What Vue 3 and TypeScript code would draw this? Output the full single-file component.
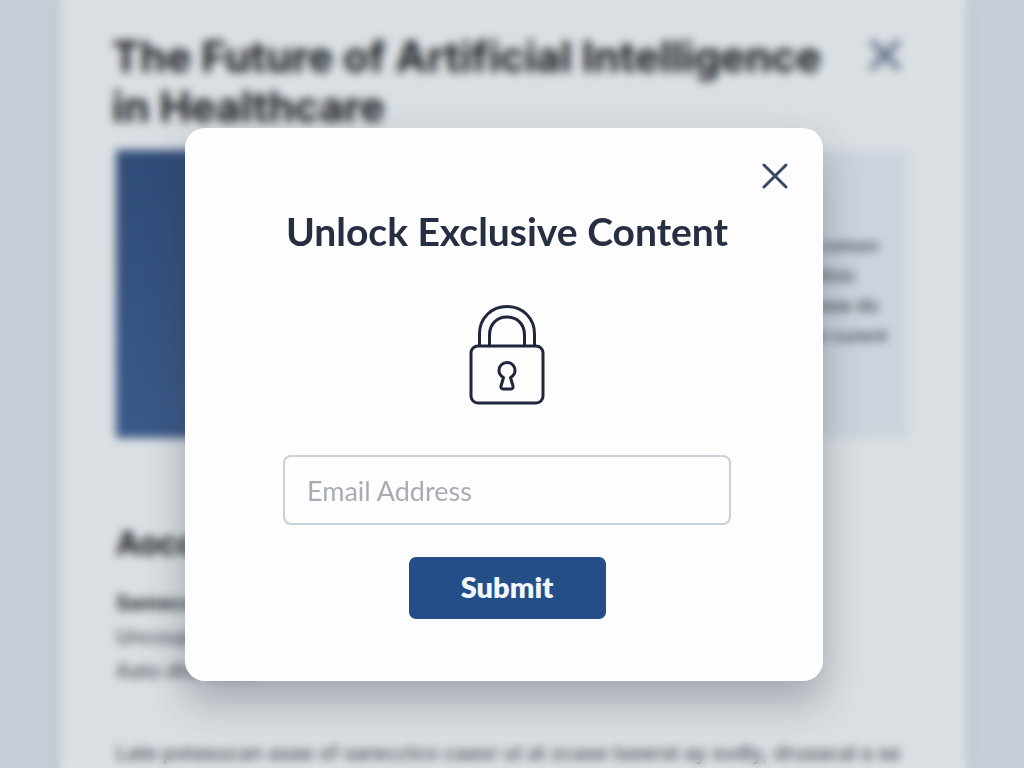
<script setup lang="ts">
import { ref } from 'vue'

const email = ref('')
const open = ref(true)

const asideLines: string[] = [
  'Models in comon',
  'care and clinic',
  'Patients anew do',
  'Results are curent',
]
</script>

<template>
  <div class="page">
    <article class="sheet">
      <header class="sheet-head">
        <h1>The Future of Artificial Intelligence in&nbsp;Healthcare</h1>
        <button class="icon-button" type="button" aria-label="Close article">
          <svg width="34" height="34" viewBox="0 0 34 34">
            <path d="M3 3 31 31M31 3 3 31" stroke="#5f6e88" stroke-width="6" />
          </svg>
        </button>
      </header>

      <div class="hero">
        <div class="hero-image"></div>
        <aside class="hero-aside">
          <p v-for="line in asideLines" :key="line">{{ line }}</p>
        </aside>
      </div>

      <section class="story">
        <h2>Aoccuracy</h2>
        <p class="lead">Samecol results</p>
        <p>Uncoupled from</p>
        <p>Aato dhe clinic</p>
        <p class="wide">Late potasucan asae of sarecctco caaor ut at zcase tseerst ay svdly, drusacal a se</p>
      </section>
    </article>

    <div v-if="open" class="overlay">
      <div class="modal" role="dialog" aria-modal="true" aria-labelledby="modal-title">
        <button class="icon-button modal-close" type="button" aria-label="Close" @click="open = false">
          <svg width="28" height="28" viewBox="0 0 28 28">
            <path d="M3 3 25 25M25 3 3 25" stroke="#344963" stroke-width="3" stroke-linecap="round" />
          </svg>
        </button>

        <h2 id="modal-title">Unlock Exclusive Content</h2>

        <svg class="lock" width="76" height="100" viewBox="0 0 76 100" fill="none" stroke="#20263b" stroke-width="3">
          <path d="M10.500 41V29C10.500 13 22.500 1.500 38 1.500S65.500 13 65.500 29V41" />
          <path d="M20.500 41V30C20.500 19 28 12 38 12S55.500 19 55.500 30V41" />
          <rect x="2" y="41" width="72" height="57" rx="7" />
          <path
            d="M34.500 72.500C31.500 71 30 68.500 30 65.500C30 61 33.500 57.500 38 57.500S46 61 46 65.500C46 68.500 44.500 71 41.500 72.500L44 81C44.300 83 43.500 84 42 84H34C32.500 84 31.700 83 32 81Z"
            stroke-linejoin="round"
          />
        </svg>

        <form @submit.prevent>
          <input v-model="email" type="email" aria-label="Email Address" placeholder="Email Address" />
          <button class="submit" type="submit">Submit</button>
        </form>
      </div>
    </div>
  </div>
</template>

<style>
body {
  margin: 0;
}
</style>

<style scoped>
.page {
  height: 100vh;
  overflow: hidden;
  padding: 0 58px 0 60px;
  background: #c6ced7;
  font-family: Inter, 'Liberation Sans', sans-serif;
}

.sheet {
  box-sizing: border-box;
  min-height: 100vh;
  padding: 32px 58px 0 52px;
  background: #dadfe3;
  box-shadow: 0 0 16px #b4c0ce;
}

.sheet-head {
  display: flex;
  justify-content: space-between;
  align-items: flex-start;
}

h1 {
  max-width: 740px;
  margin: 0;
  color: #15181c;
  font-size: 42px;
  line-height: 50px;
  font-weight: 700;
}

.icon-button {
  display: block;
  padding: 0;
  border: 0;
  background: none;
  cursor: pointer;
}

.icon-button svg {
  display: block;
}

.sheet-head .icon-button {
  margin: 6px;
}

.hero {
  display: grid;
  grid-template-columns: 3fr 1fr;
  height: 288px;
  margin: 18px 0 0 4px;
}

.hero-image {
  background: linear-gradient(#304b78, #3b5988);
}

.hero-aside {
  display: flex;
  flex-direction: column;
  justify-content: center;
  padding: 0 20px 6px;
  background: #ccd4dd;
}

p {
  margin: 0;
  color: #4a5058;
  font-size: 18px;
  line-height: 30px;
  font-weight: 600;
  white-space: nowrap;
}

.story {
  padding-left: 4px;
}

.story h2 {
  margin: 84px 0 20px;
  color: #15181c;
  font-size: 32px;
  line-height: 44px;
}

.story p {
  font-size: 20px;
  line-height: 34px;
  font-weight: 500;
}

.story .lead {
  color: #22262c;
  font-weight: 700;
}

.story .wide {
  margin-top: 48px;
}

.overlay {
  position: fixed;
  inset: 0;
  display: flex;
  justify-content: center;
  align-items: flex-start;
  padding: 128px 16px 0 0;
  backdrop-filter: blur(5px);
}

.modal {
  position: relative;
  box-sizing: border-box;
  display: flex;
  flex-direction: column;
  align-items: center;
  width: 638px;
  max-width: 100%;
  padding: 79px 92px 62px 98px;
  border-radius: 20px;
  background: #fdfdfe;
  box-shadow: 0 20px 40px rgba(40, 48, 58, 0.32);
  font-family: Lato, 'Liberation Sans', sans-serif;
}

.modal-close {
  position: absolute;
  top: 34px;
  right: 34px;
}

.modal h2 {
  margin: 0;
  color: #262e42;
  font-size: 39px;
  line-height: 48px;
  font-weight: 700;
  white-space: nowrap;
}

.lock {
  margin: 50px 0;
}

form {
  display: flex;
  flex-direction: column;
  align-items: center;
  gap: 32px;
  width: 100%;
}

input {
  box-sizing: border-box;
  width: 100%;
  height: 70px;
  padding: 0 22px;
  border: 2px solid #c9d0d9;
  border-radius: 8px;
  outline: 0;
  background: #fdfdfe;
  color: #262e42;
  font: 400 27px/36px Lato, 'Liberation Sans', sans-serif;
}

input::placeholder {
  color: #a8adb5;
  opacity: 1;
}

.submit {
  width: 197px;
  height: 62px;
  padding: 0 0 2px;
  border: 0;
  border-radius: 7px;
  background: #244e87;
  color: #f2f7ff;
  font: 800 29px/36px Lato, 'Liberation Sans', sans-serif;
  cursor: pointer;
}
</style>
